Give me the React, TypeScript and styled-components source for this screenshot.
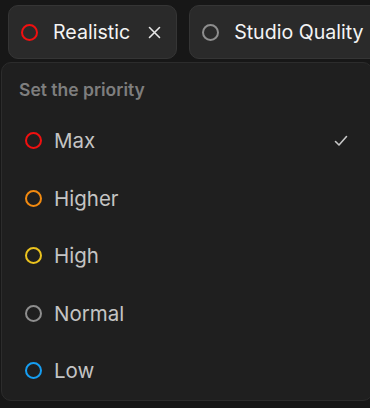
import styled, { createGlobalStyle } from "styled-components";

const GlobalStyle = createGlobalStyle`
  html, body {
    margin: 0;
    padding: 0;
    background: #171717;
    font-family: Inter, "Noto Sans", sans-serif;
    overflow: hidden;
  }
`;

const Page = styled.div`
  width: 370px;
  height: 408px;
  position: relative;
  overflow: hidden;
`;

const ChipRow = styled.div`
  display: flex;
  gap: 12px;
  padding: 5px 0 0 8px;
  white-space: nowrap;
`;

const Chip = styled.div`
  display: flex;
  align-items: center;
  gap: 15px;
  height: 54px;
  box-sizing: border-box;
  padding: 0 15px 0 12px;
  background: #2a2a2a;
  border: 1px solid #353535;
  border-radius: 10px;
  color: #f4f4f4;
  font-size: 19.6px;
  flex-shrink: 0;
`;

const Ring = styled.span<{ $color: string }>`
  width: 17px;
  height: 17px;
  box-sizing: border-box;
  border-radius: 50%;
  border: 2.8px solid ${(p) => p.$color};
  flex-shrink: 0;
`;

const Close = styled.span`
  margin-left: 3px;
  display: flex;
  color: #e6e6e6;
`;

const Panel = styled.div`
  margin: 3px 0 0 1px;
  width: 372px;
  height: 339px;
  box-sizing: border-box;
  background: #1f1f1f;
  border: 1px solid #2c2c2c;
  border-radius: 10px;
  padding: 15px 0 0 0;
`;

const Heading = styled.div`
  padding-left: 17px;
  height: 24px;
  line-height: 24px;
  font-size: 17.5px;
  font-weight: 600;
  color: #7e7e7e;
  margin-bottom: 10px;
`;

const Item = styled.div`
  display: flex;
  align-items: center;
  height: 57.5px;
  padding-left: 23px;
  padding-right: 24px;
  gap: 12px;
  font-size: 20.5px;
  color: #c4c4c4;
`;

const Label = styled.span`
  flex: 1;
`;

const Check = styled.span`
  display: flex;
  color: #c8c8c8;
`;

const items = [
  { label: "Max", color: "#f01010", selected: true },
  { label: "Higher", color: "#f28a10" },
  { label: "High", color: "#ebc31e" },
  { label: "Normal", color: "#8e8e8e" },
  { label: "Low", color: "#169ef2" },
];

export default function App() {
  return (
    <Page>
      <GlobalStyle />
      <ChipRow>
        <Chip>
          <Ring $color="#f01010" />
          <span>Realistic</span>
          <Close>
            <svg width="13" height="13" viewBox="0 0 13 13">
              <path d="M1.5 1.5 L11.5 11.5 M11.5 1.5 L1.5 11.5" stroke="currentColor" strokeWidth="1.6" strokeLinecap="round" />
            </svg>
          </Close>
        </Chip>
        <Chip>
          <Ring $color="#8e8e8e" />
          <span>Studio Quality</span>
        </Chip>
      </ChipRow>
      <Panel>
        <Heading>Set the priority</Heading>
        {items.map((it) => (
          <Item key={it.label}>
            <Ring $color={it.color} />
            <Label>{it.label}</Label>
            {it.selected && (
              <Check>
                <svg width="14" height="12" viewBox="0 0 14 12">
                  <path d="M1.5 6.5 L5 10 L12.5 1.5" stroke="currentColor" strokeWidth="1.6" fill="none" strokeLinecap="round" strokeLinejoin="round" />
                </svg>
              </Check>
            )}
          </Item>
        ))}
      </Panel>
    </Page>
  );
}
